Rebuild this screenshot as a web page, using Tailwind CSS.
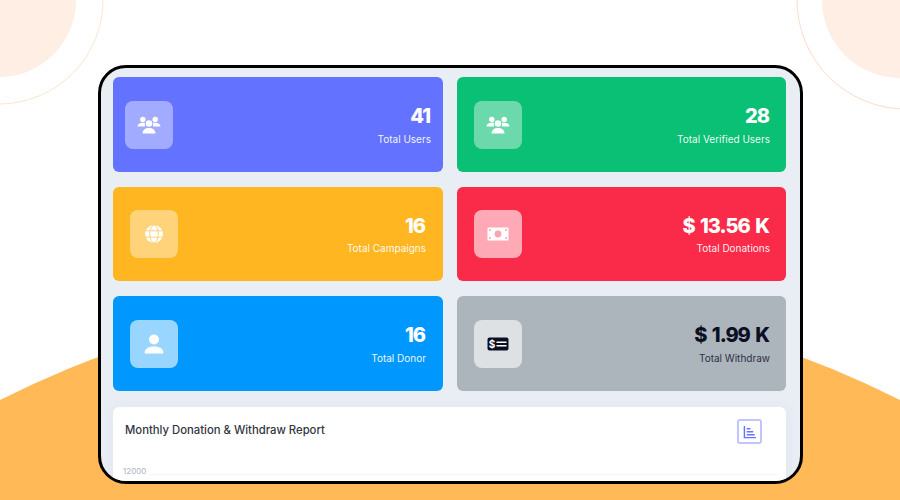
<!DOCTYPE html>
<html lang="en">
<head>
    <meta charset="UTF-8">
    <meta name="viewport" content="width=device-width, initial-scale=1.0">
    <script src="https://cdn.jsdelivr.net/npm/@tailwindcss/browser@4"></script>
    <title>Dashboard</title>
</head>
<body class="bg-white">
    <div class="relative w-[900px] h-[500px] overflow-hidden bg-white font-['Inter',sans-serif]">
        <!-- background shapes -->
        <svg class="absolute inset-0" width="900" height="500" viewBox="0 0 900 500">
            <circle cx="-1" cy="0" r="77" fill="#feeee3"/>
            <circle cx="-1" cy="0" r="104" fill="none" stroke="#fde6cf" stroke-width="1"/>
            <circle cx="900" cy="0" r="78" fill="#feeee3"/>
            <circle cx="906" cy="0" r="109" fill="none" stroke="#fddccb" stroke-width="1"/>
            <circle cx="450" cy="1292" r="999" fill="#ffb957"/>
        </svg>

        <div class="relative pt-[65px] pl-[98px]">
            <div class="w-[705px] h-[419px] overflow-hidden rounded-[28px] border-[3px] border-black bg-[#e9edf4] pt-[9px] pl-3 pr-[14px]">
                <div class="grid grid-cols-[330px_329px] gap-x-[14px] gap-y-[15px]">
                    <div class="flex h-[95px] items-center justify-between rounded-md bg-[#6373ff] pl-3 pr-3 text-white">
                        <div class="flex size-12 items-center justify-center rounded-lg bg-white/40">
                            <svg width="24" height="24" viewBox="0 0 24 24" fill="white">
                                <circle cx="5.8" cy="6.5" r="2.7"/>
                                <circle cx="18.2" cy="6.5" r="2.7"/>
                                <circle cx="12" cy="10.5" r="3.3"/>
                                <path d="M.5 13.5c0-2.5 2.200-3.800 5.300-3.800 1 0 1.700.2 2.200.4-.3.8-.4 2 .2 3.400z"/>
                                <path d="M23.500 13.500c0-2.500-2.200-3.800-5.300-3.800-1 0-1.700.2-2.200.4.3.8.4 2-.2 3.400z"/>
                                <path d="M5.500 20.500c0-3.500 2.700-5.500 6.500-5.500s6.500 2 6.500 5.500z"/>
                            </svg>
                        </div>
                        <div class="text-right">
                            <p class="pr-px text-[20px] leading-[26px] font-extrabold tracking-[-1px] [word-spacing:2px]">41</p>
                            <p class="mt-[3px] text-[10px] leading-[14px] text-white/95">Total Users</p>
                        </div>
                    </div>

                    <div class="flex h-[95px] items-center justify-between rounded-md bg-[#0ac075] pl-[17px] pr-4 text-white">
                        <div class="flex size-12 items-center justify-center rounded-lg bg-white/40">
                            <svg width="24" height="24" viewBox="0 0 24 24" fill="white">
                                <circle cx="5.8" cy="6.5" r="2.7"/>
                                <circle cx="18.2" cy="6.5" r="2.7"/>
                                <circle cx="12" cy="10.5" r="3.3"/>
                                <path d="M.5 13.5c0-2.5 2.200-3.800 5.300-3.800 1 0 1.700.2 2.200.4-.3.8-.4 2 .2 3.400z"/>
                                <path d="M23.500 13.500c0-2.500-2.200-3.800-5.300-3.800-1 0-1.700.2-2.200.4.3.8.4 2-.2 3.400z"/>
                                <path d="M5.500 20.500c0-3.500 2.700-5.500 6.500-5.500s6.500 2 6.500 5.500z"/>
                            </svg>
                        </div>
                        <div class="text-right">
                            <p class="pr-px text-[20px] leading-[26px] font-extrabold tracking-[-1px] [word-spacing:2px]">28</p>
                            <p class="mt-[3px] text-[10px] leading-[14px] text-white/95">Total Verified Users</p>
                        </div>
                    </div>

                    <div class="flex h-[94px] items-center justify-between rounded-md bg-[#ffb620] pl-[17px] pr-[17px] text-white">
                        <div class="flex size-12 items-center justify-center rounded-lg bg-white/40">
                            <svg width="20" height="20" viewBox="0 0 20 20" fill="none">
                                <circle cx="10" cy="10" r="9" fill="white"/>
                                <ellipse cx="10" cy="10" rx="4.200" ry="9" stroke="#ffd27a" stroke-width="1"/>
                                <path d="M1 6.800h18M.8 13.200h18.400" stroke="#ffd27a" stroke-width="1"/>
                            </svg>
                        </div>
                        <div class="text-right">
                            <p class="pr-px text-[20px] leading-[26px] font-extrabold tracking-[-1px] [word-spacing:2px]">16</p>
                            <p class="mt-[2px] text-[10px] leading-[14px] text-white/95">Total Campaigns</p>
                        </div>
                    </div>

                    <div class="flex h-[94px] items-center justify-between rounded-md bg-[#fa2a49] pl-[17px] pr-4 text-white">
                        <div class="flex size-12 items-center justify-center rounded-lg bg-white/60">
                            <svg width="22" height="14" viewBox="0 0 22 14">
                                <rect x="0.500" y="0.500" width="21" height="13" rx="0.500" fill="white"/>
                                <circle cx="11" cy="7" r="3.400" fill="#fda4b2"/>
                                <circle cx="3" cy="3" r="1" fill="#fda4b2"/>
                                <circle cx="19" cy="3" r="1" fill="#fda4b2"/>
                                <circle cx="3" cy="11" r="1" fill="#fda4b2"/>
                                <circle cx="19" cy="11" r="1" fill="#fda4b2"/>
                            </svg>
                        </div>
                        <div class="text-right">
                            <p class="pr-px text-[20px] leading-[26px] font-extrabold tracking-[-1px] [word-spacing:2px]">$ 13.56 K</p>
                            <p class="mt-[2px] text-[10px] leading-[14px] text-white/95">Total Donations</p>
                        </div>
                    </div>

                    <div class="flex h-[95px] items-center justify-between rounded-md bg-[#0098ff] pl-[17px] pr-[17px] text-white">
                        <div class="flex size-12 items-center justify-center rounded-lg bg-white/60">
                            <svg width="20" height="20" viewBox="0 0 20 20" fill="white">
                                <circle cx="10" cy="5.500" r="5"/>
                                <path d="M0.500 19.500c0-4.500 3.500-7 9.500-7s9.500 2.500 9.500 7z"/>
                            </svg>
                        </div>
                        <div class="text-right">
                            <p class="pr-px text-[20px] leading-[26px] font-extrabold tracking-[-1px] [word-spacing:2px]">16</p>
                            <p class="mt-[3px] text-[10px] leading-[14px] text-white/95">Total Donor</p>
                        </div>
                    </div>

                    <div class="flex h-[95px] items-center justify-between rounded-md bg-[#adb5bc] pl-[17px] pr-4 text-[#0b0f24]">
                        <div class="flex size-12 items-center justify-center rounded-lg bg-white/60">
                            <svg width="22" height="14" viewBox="0 0 22 14">
                                <rect x="0.500" y="0.500" width="21" height="13" rx="2" fill="#0b0f24"/>
                                <text x="5" y="10.500" text-anchor="middle" font-size="10" font-weight="700" fill="white" font-family="Inter, sans-serif">$</text>
                                <path d="M9.500 5.200h10M9.500 8.800h10" stroke="white" stroke-width="1.400"/>
                            </svg>
                        </div>
                        <div class="text-right">
                            <p class="pr-px text-[20px] leading-[26px] font-extrabold tracking-[-1px] [word-spacing:2px]">$ 1.99 K</p>
                            <p class="mt-[3px] text-[10px] leading-[14px] text-[#2c3046]">Total Withdraw</p>
                        </div>
                    </div>
                </div>

                <div class="mt-4 h-[100px] rounded-t-md bg-white pl-3 pr-6 pt-3 shadow-[0_0_12px_rgba(180,190,210,0.15)]">
                    <div class="flex items-start justify-between">
                        <h3 class="mt-[3px] text-[11.300px] leading-[16px] font-medium text-[#33363f]">Monthly Donation &amp; Withdraw Report</h3>
                        <div class="flex size-[25px] items-center justify-center rounded-[3px] border-2 border-[#c0c5ff]">
                            <svg width="14" height="14" viewBox="0 0 15 15" fill="none" stroke="#6772ff" stroke-width="1.500">
                                <path d="M1.500 1v12.500H14"/>
                                <path d="M4 4h4M4 7.200h7M4 10.400h8.500"/>
                            </svg>
                        </div>
                    </div>
                    <div class="mt-[22px] -mr-4 flex items-end gap-1">
                        <span class="-ml-[2px] text-[8px] leading-[10px] text-[#b0b3c0]">12000</span>
                        <div class="mb-[1px] h-px flex-1 bg-[#f4f5f7]"></div>
                    </div>
                </div>
            </div>
        </div>
    </div>
</body>
</html>
